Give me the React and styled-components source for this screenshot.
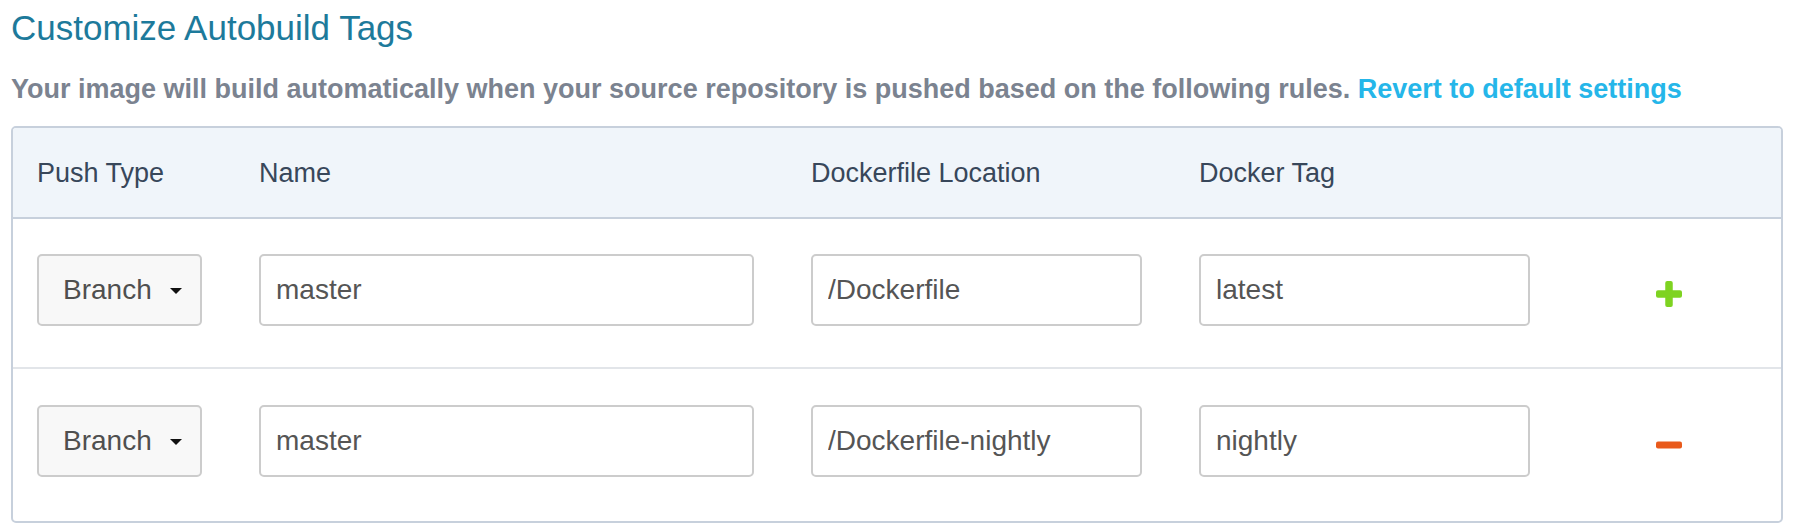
import React from "react";
import styled, { createGlobalStyle } from "styled-components";

const GlobalStyle = createGlobalStyle`
  body {
    margin: 0;
    background: #ffffff;
    font-family: "Liberation Sans", Arial, sans-serif;
  }
`;

const Page = styled.div`
  padding: 8px 13px 0 11px;
`;

const Title = styled.h2`
  margin: 0;
  font-size: 35px;
  line-height: 40px;
  font-weight: normal;
  color: #1d7a9b;
`;

const Subtitle = styled.p`
  margin: 25px 0 21px;
  font-size: 27px;
  line-height: 32px;
  font-weight: bold;
  color: #7b8390;
`;

const Link = styled.a`
  color: #25b6e9;
  text-decoration: none;
  cursor: pointer;
`;

const Table = styled.div`
  border: 2px solid #c7d0dc;
  border-radius: 5px;
  overflow: hidden;
`;

const Row = styled.div`
  display: grid;
  grid-template-columns: 165px 495px 331px 331px 1fr;
  column-gap: 57px;
  align-items: center;
  padding: ${(p) => (p.$last ? "36px 24px 44px" : "35px 24px 41px")};
  border-bottom: ${(p) => (p.$last ? "none" : "2px solid #e2e5e9")};
`;

const HeaderRow = styled(Row)`
  height: 88px;
  padding: 1px 24px 0;
  background: #f0f5fa;
  border-bottom: 2px solid #c7d0dc;
`;

const HeaderCell = styled.div`
  font-size: 27px;
  color: #38475a;
`;

const Dropdown = styled.button`
  display: flex;
  align-items: center;
  justify-content: space-between;
  box-sizing: border-box;
  height: 72px;
  padding: 0 18px 0 24px;
  background: #f8f8f8;
  border: 2px solid #cccccc;
  border-radius: 5px;
  font-family: "Liberation Sans", Arial, sans-serif;
  font-size: 28px;
  color: #4f4f4f;
  cursor: pointer;
`;

const Caret = styled.span`
  width: 0;
  height: 0;
  border-left: 6px solid transparent;
  border-right: 6px solid transparent;
  border-top: 6px solid #111;
  margin-top: 2px;
`;

const Input = styled.input`
  box-sizing: border-box;
  width: 100%;
  height: 72px;
  padding: 0 15px;
  border: 2px solid #cccccc;
  border-radius: 5px;
  font-family: "Liberation Sans", Arial, sans-serif;
  font-size: 28px;
  color: #555555;
  outline: none;
`;

const IconButton = styled.button`
  justify-self: center;
  margin: 8px 0 0 -6px;
  padding: 0;
  border: none;
  background: none;
  cursor: pointer;
  line-height: 0;
`;

const PlusIcon = () => (
  <svg width="26" height="26" viewBox="0 0 26 26">
    <rect x="9.25" y="0" width="7.5" height="26" rx="2" fill="#7ed321" />
    <rect x="0" y="9.25" width="26" height="7.5" rx="2" fill="#7ed321" />
  </svg>
);

const MinusIcon = () => (
  <svg width="26" height="8" viewBox="0 0 26 8">
    <rect x="0" y="0.5" width="26" height="7" rx="2" fill="#e95a1b" />
  </svg>
);

const rules = [
  { type: "Branch", name: "master", location: "/Dockerfile", tag: "latest", add: true },
  { type: "Branch", name: "master", location: "/Dockerfile-nightly", tag: "nightly", add: false },
];

export default function App() {
  return (
    <Page>
      <GlobalStyle />
      <Title>Customize Autobuild Tags</Title>
      <Subtitle>
        Your image will build automatically when your source repository is pushed based on the
        following rules. <Link>Revert to default settings</Link>
      </Subtitle>
      <Table>
        <HeaderRow>
          <HeaderCell>Push Type</HeaderCell>
          <HeaderCell>Name</HeaderCell>
          <HeaderCell>Dockerfile Location</HeaderCell>
          <HeaderCell>Docker Tag</HeaderCell>
          <div />
        </HeaderRow>
        {rules.map((r, i) => (
          <Row key={i} $last={i === rules.length - 1}>
            <Dropdown>
              {r.type}
              <Caret />
            </Dropdown>
            <Input defaultValue={r.name} />
            <Input defaultValue={r.location} />
            <Input defaultValue={r.tag} />
            <IconButton>{r.add ? <PlusIcon /> : <MinusIcon />}</IconButton>
          </Row>
        ))}
      </Table>
    </Page>
  );
}
